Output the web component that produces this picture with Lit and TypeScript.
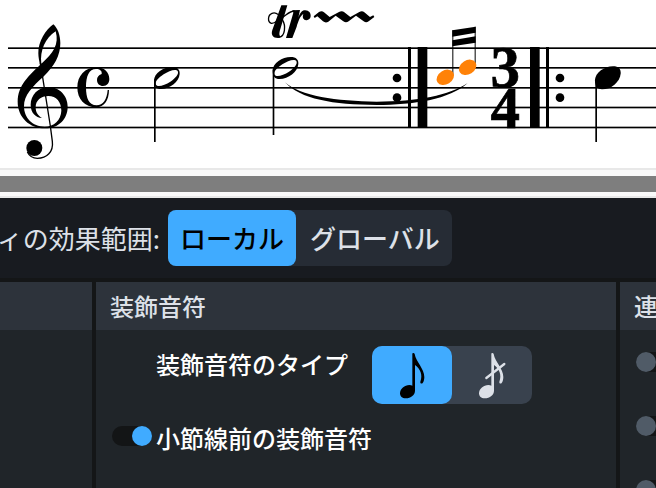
import { LitElement, html, css, svg } from "lit";
import { customElement, state } from "lit/decorators.js";

const STAFF_LINES = [144, 203, 263, 322, 382];

/** Notation strip. Shapes are drawn on a grid of three units per pixel. */
@customElement("score-strip")
export class ScoreStrip extends LitElement {
  static styles = css`
    :host {
      display: block;
      background: #fff;
    }
    .score {
      display: block;
      width: 100%;
      height: 168px;
    }
    .meter {
      font: bold 177px "Liberation Serif", serif;
      text-anchor: middle;
      stroke: #000;
      stroke-width: 2px;
    }
    .grace {
      fill: #ff8208;
    }
    .line {
      fill: none;
      stroke: #000;
    }
  `;

  private half(x: number, y: number, stemEnd: number) {
    return svg`
      <g transform="translate(${x} ${y})">
        <path fill-rule="evenodd" d="M-39 8 C-39 -15 -10 -33 15 -33 C32 -33 39 -25 38 -12 C36 12 8 33 -18 33 C-33 33 -39 25 -39 8 Z M-33 20 C-28 29 -6 21 10 11 C25 1 37 -12 32 -21 C26 -29 5 -21 -10 -11 C-27 0 -37 12 -33 20 Z"/>
      </g>
      <rect x=${x - 39} y=${y + 4} width="5" height=${stemEnd - y - 4} />`;
  }

  render() {
    return html`
      <svg class="score" role="img" aria-label="楽譜">
        <g transform="scale(0.33333)">
          ${STAFF_LINES.map((y) => svg`<rect x="24" y=${y - 2} width="6000" height="5"/>`)}

          <!-- treble clef -->
          <path fill-rule="evenodd" d="M160 73 C138 89 114 124 115 160 C115 172 118 184 120 195 C88 226 53 256 53 305 C53 352 89 385 135 385 C176 385 203 357 203 320 C203 286 177 261 145 261 C114 261 92 286 92 314 C92 338 107 353 126 354 C112 346 107 336 107 322 C107 301 123 288 145 288 C169 288 184 306 184 332 C183 360 162 380 134 380 C97 380 72 353 72 319 C72 285 98 259 130 230 C163 200 181 166 181 130 C181 106 173 84 160 73 Z M167 94 C178 133 160 160 124 191 C119 152 136 114 167 94 Z"/>
          <path class="line" stroke-width="4" d="M121 188 L151 378 L157 424 C161 456 140 475 112 475 C96 475 87 466 82 456"/>
          <circle cx="103" cy="444" r="24"/>

          <!-- common time -->
          <path d="M290 202 C255 202 232 228 232 262 C232 298 254 322 289 322 C312 322 327 300 327 270 L323 270 C321 298 309 316 290 316 C267 316 258 296 258 262 C258 228 267 207 288 207 C300 207 307 213 305 222 C295 225 291 232 291 240 C291 251 299 258 309 258 C321 258 328 249 328 237 C328 218 314 202 290 202 Z"/>

          ${this.half(501, 234, 426)} ${this.half(857, 204, 405)}

          <!-- trill -->
          <g transform="translate(660 0)">
            <path d="M184 16 L202 16 L182 84 C178 96 176 106 182 110 L176 114 C159 115 152 104 157 90 Z"/>
            <path class="line" stroke-width="4" d="M177 112 C196 109 198 77 187 59 C178 44 166 36 156 40 C143 45 142 66 154 70 C164 72 172 60 184 54 C198 47 207 33 224 33"/>
            <path d="M217 31 L240 30 L235 53 C240 38 247 30 256 31 C267 32 273 39 272 49 C271 58 264 62 256 60 C248 58 247 49 250 42 C241 46 234 66 230 80 L217 114 L198 114 L220 38 Z"/>
            <path d="M281 49 L297 36 C302 33 308 33 312 37 L329 51 L357 36 C362 33 369 33 373 37 L391 51 L418 36 C423 33 429 33 433 37 L450 51 L460 46 L463 51 L446 64 C441 68 436 68 431 64 L408 47 L386 64 C381 68 375 68 370 64 L347 47 L325 65 C320 68 314 68 309 64 L292 49 L284 54 Z"/>
          </g>

          <path d="M855 247 C900 288 1010 304 1130 305 C1250 305 1350 286 1403 249 C1350 298 1240 315 1130 315 C1000 315 900 297 855 247 Z"/>

          <!-- end repeat -->
          <circle cx="1191" cy="234" r="13"/>
          <circle cx="1191" cy="293" r="13"/>
          <rect x="1224" y="141" width="9" height="243"/>
          <rect x="1253" y="141" width="29" height="243"/>

          <!-- grace notes -->
          <g transform="translate(1290 0)">
            <path d="M67 91 L137 80 V98 L67 110 Z M67 121 L137 109 V128 L67 139 Z"/>
            <path d="M67 91 h3 V224 h-3 Z M134 80 h3 V196 h-3 Z"/>
            <ellipse class="grace" rx="28" ry="21" transform="translate(46 232) rotate(-32)"/>
            <ellipse class="grace" rx="28" ry="21" transform="translate(113 202) rotate(-32)"/>
          </g>

          <text class="meter" x="1516" y="262">3</text>
          <text class="meter" x="1516" y="383">4</text>

          <!-- start repeat -->
          <rect x="1590" y="141" width="29" height="243"/>
          <rect x="1638" y="141" width="9" height="243"/>
          <circle cx="1680" cy="234" r="13"/>
          <circle cx="1680" cy="293" r="13"/>

          <path d="M1785 241 C1785 218 1814 199 1839 199 C1856 199 1863 207 1862 221 C1860 246 1833 268 1806 268 C1792 268 1785 260 1785 241 Z"/>
          <rect x="1786" y="236" width="5" height="190"/>
        </g>
      </svg>
    `;
  }
}

@customElement("app-root")
export class AppRoot extends LitElement {
  static styles = css`
    :host {
      display: flex;
      flex-direction: column;
      min-height: 100vh;
      overflow: hidden;
      background: #141617;
      color: #fff;
      font-family: "Noto Sans CJK JP", sans-serif;
      font-size: 24px;
      font-weight: 500;
      line-height: 36px;
    }
    .splitter {
      height: 16px;
      background: #7e7e7e;
      border-top: 6px solid #f9f9f9;
      border-bottom: 4px solid #f9f9f9;
      outline: 2px solid #e8e8e8;
      margin: 2px 0;
    }
    button {
      margin: 0;
      padding: 0;
      border: 0;
      background: none;
      color: #dde1e8;
      font: inherit;
    }
    .scope {
      display: flex;
      align-items: center;
      gap: 8px;
      padding: 12px 0;
      background: #181b20;
      font-size: 26px;
    }
    .scope-label {
      display: flex;
      flex: 0 0 160px;
      justify-content: flex-end;
      overflow: hidden;
      color: #dde1e8;
      font-weight: 400;
      white-space: nowrap;
    }
    .segments {
      display: flex;
      border-radius: 8px;
      background: #262c35;
    }
    .segment {
      height: 56px;
      padding: 0 12px;
      border-radius: 8px;
      white-space: nowrap;
    }
    .segment.wide {
      padding: 0 12px 0 14px;
    }
    .types {
      margin-left: 24px;
      border-radius: 10px;
      background: #39424e;
    }
    .types .segment {
      width: 80px;
      height: 58px;
      padding: 0;
      border-radius: 10px;
    }
    .segment.on,
    .types .segment.on {
      background: #40abff;
      color: #000;
    }
    .icon {
      display: block;
      width: 80px;
      height: 58px;
      fill: currentColor;
    }
    .slash {
      fill: none;
      stroke: currentColor;
      stroke-linecap: round;
      stroke-width: 7px;
    }
    .panels {
      display: grid;
      flex: 1;
      grid-template-columns: 92px minmax(0, 1fr) 36px;
      gap: 4px;
      padding-top: 4px;
    }
    .panel {
      overflow: hidden;
      background: #202529;
      white-space: nowrap;
    }
    .heading {
      height: 48px;
      margin: 0;
      padding: 0 14px;
      background: #2d333b;
      color: #dde1e8;
      font-size: 24px;
      font-weight: 500;
      line-height: 48px;
    }
    .rows {
      display: flex;
      flex-direction: column;
      gap: 16px;
      padding: 16px;
    }
    .row {
      display: flex;
      align-items: flex-start;
      gap: 4px;
    }
    .row.indent {
      gap: 0;
      padding-left: 44px;
    }
    .switches {
      display: flex;
      flex-direction: column;
      gap: 32px;
      height: 120px;
      padding: 16px;
    }
    .switch {
      flex: none;
      width: 40px;
      height: 20px;
      margin: 6px 0;
      border-radius: 10px;
      background: #131516;
      appearance: none;
    }
    .switch::before {
      display: block;
      width: 20px;
      height: 20px;
      border-radius: 50%;
      background: #505b67;
      content: "";
    }
    .switch:checked::before {
      margin-left: auto;
      background: #40abff;
    }
  `;

  @state() private scope = "local";
  @state() private slashed = false;

  private note(slashed: boolean) {
    return html`<svg class="icon" viewBox="0 0 240 174" aria-hidden="true">
      <g transform=${slashed ? "translate(-3 0)" : "translate(0 0)"}>
        <path d="M121 24 C121 20 127 20 128 24 C132 48 157 68 157 93 C157 100 155 108 152 111 C149 115 144 112 145 107 C153 87 145 68 129 57 L129 134 C129 146 117 157 101 157 C91 157 84 151 84 142 C84 128 98 117 112 117 C116 117 119 118 121 119 Z" />
        ${slashed ? svg`<path class="slash" d="M106 96 L160 54"/>` : null}
      </g>
    </svg>`;
  }

  render() {
    const local = this.scope === "local";
    return html`
      <score-strip></score-strip>
      <div class="splitter" role="separator"></div>
      <div class="scope">
        <div class="scope-label" id="scope">ィの効果範囲:</div>
        <div class="segments" role="group" aria-labelledby="scope">
          <button class="segment ${local ? "on" : ""}" aria-pressed=${local} @click=${() => (this.scope = "local")}>ローカル</button>
          <button class="segment wide ${local ? "" : "on"}" aria-pressed=${!local} @click=${() => (this.scope = "global")}>グローバル</button>
        </div>
      </div>
      <div class="panels">
        <section class="panel"><div class="heading"></div></section>
        <section class="panel">
          <h2 class="heading">装飾音符</h2>
          <div class="rows">
            <div class="row indent">
              <span id="type">装飾音符のタイプ</span>
              <div class="segments types" role="group" aria-labelledby="type">
                ${[false, true].map(
                  (s) => html`<button
                    class="segment ${this.slashed === s ? "on" : ""}"
                    aria-pressed=${this.slashed === s}
                    aria-label=${s ? "短前打音" : "長前打音"}
                    @click=${() => (this.slashed = s)}
                  >${this.note(s)}</button>`
                )}
              </div>
            </div>
            <div class="row">
              <input class="switch" id="before" type="checkbox" checked />
              <label for="before">小節線前の装飾音符</label>
            </div>
          </div>
        </section>
        <section class="panel">
          <h2 class="heading">連</h2>
          <div class="switches">
            ${["1", "2", "3"].map((n) => html`<input class="switch" type="checkbox" aria-label="連 ${n}" />`)}
          </div>
        </section>
      </div>
    `;
  }
}
